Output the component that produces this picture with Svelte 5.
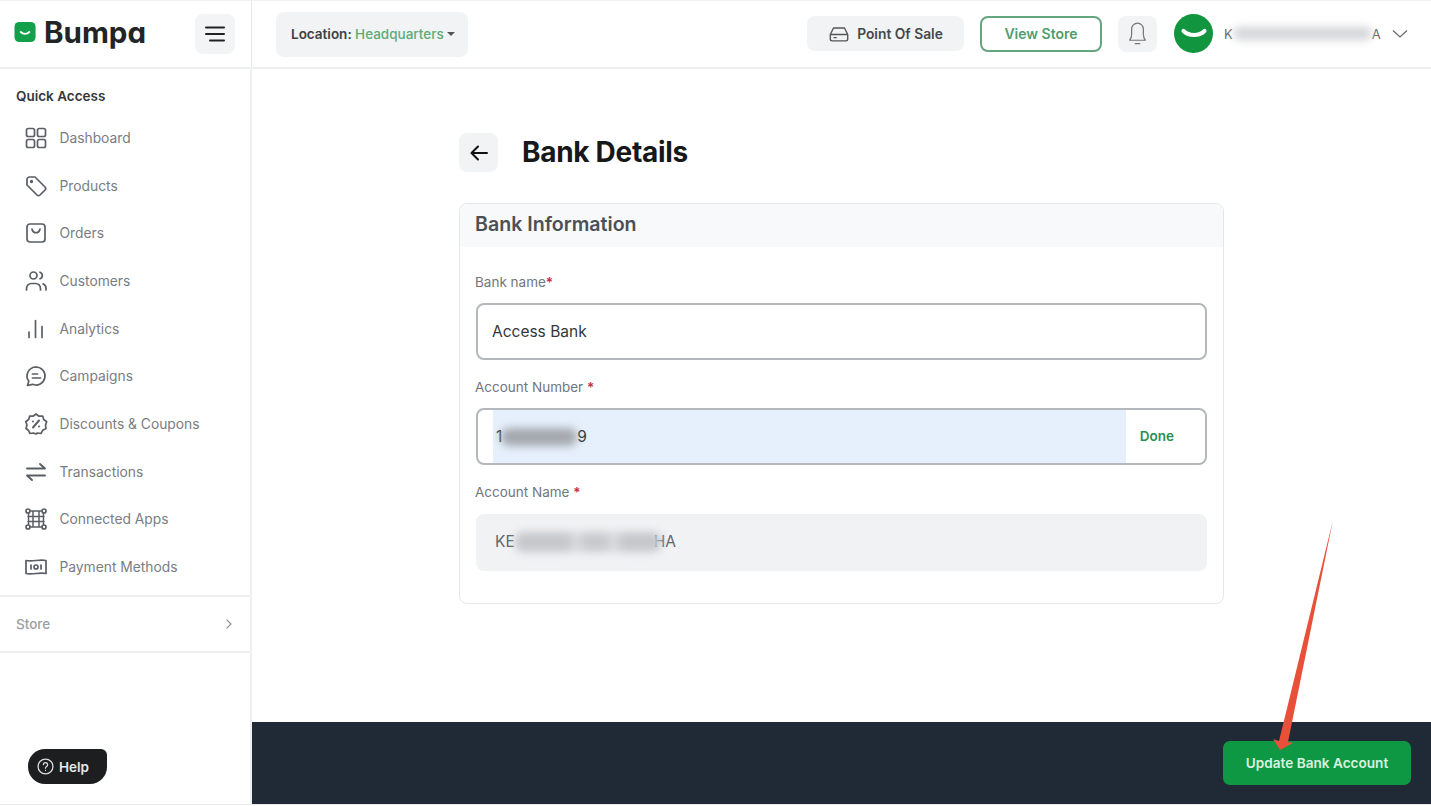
<script>
  const menu = [
    { label: "Dashboard", icon: "grid" },
    { label: "Products", icon: "tag" },
    { label: "Orders", icon: "bag" },
    { label: "Customers", icon: "users" },
    { label: "Analytics", icon: "bars" },
    { label: "Campaigns", icon: "chat" },
    { label: "Discounts & Coupons", icon: "percent" },
    { label: "Transactions", icon: "swap" },
    { label: "Connected Apps", icon: "apps" },
    { label: "Payment Methods", icon: "cash" }
  ];
</script>

<div class="page">
  <header class="top">
    <div class="brand">
      <svg class="logo" viewBox="0 0 24 24" width="23" height="23">
        <rect x="0.5" y="1" width="22" height="21" rx="5" fill="#12a04a" />
        <path d="M7 11.5c2.5 2.6 6.5 2.6 9 0" fill="none" stroke="#fff" stroke-width="2" stroke-linecap="round" />
      </svg>
      <span class="wordmark">Bumpa</span>
      <button class="burger" aria-label="Menu">
        <svg viewBox="0 0 24 24" width="24" height="24" fill="none" stroke="#222" stroke-width="2" stroke-linecap="round">
          <path d="M3 5.5h18M3 12h18M7 18.5h14" />
        </svg>
      </button>
    </div>
    <div class="topbar">
      <button class="location">Location:&nbsp;<span>Headquarters</span><i></i></button>
      <div class="spacer"></div>
      <button class="pos">
        <svg viewBox="0 0 24 24" width="22" height="22" fill="none" stroke="#555" stroke-width="1.5" stroke-linejoin="round">
          <path d="M6 5.500h12l3.500 7v5a2 2 0 0 1-2 2h-15a2 2 0 0 1-2-2v-5z" />
          <path d="M2.500 12.500h19M6 16h3.500" />
        </svg>
        Point Of Sale
      </button>
      <button class="view">View Store</button>
      <button class="bell" aria-label="Notifications">
        <svg viewBox="0 0 24 24" width="27" height="27" fill="none" stroke="#777" stroke-width="1.1" stroke-linejoin="round">
          <path d="M5 18c1.400-1.400 1.800-3 1.800-5.500V8a5.200 5.200 0 0 1 10.400 0v4.500c0 2.500.4 4.100 1.800 5.500z" />
          <path d="M10 21h4" stroke-linecap="round" />
        </svg>
      </button>
      <div class="avatar">
        <svg viewBox="0 0 40 40" width="30" height="30">
          <path d="M6 16c7 7 21 7 28 0" fill="none" stroke="#fff" stroke-width="5.500" stroke-linecap="round" />
        </svg>
      </div>
      <div class="user">K<span class="smudge user-smudge"></span>A</div>
      <svg class="caret" viewBox="0 0 16 10" width="16" height="10" fill="none" stroke="#666" stroke-width="1.2">
        <path d="M1 1.5l7 6.5 7-6.5" />
      </svg>
    </div>
  </header>

  <div class="body">
    <aside class="side">
      <h4>Quick Access</h4>
      <nav>
        {#each menu as item}
          <div class="item">
            <svg viewBox="0 0 24 24" width="24" height="24" fill="none" stroke="#5a5f66" stroke-width="1.7" stroke-linecap="round" stroke-linejoin="round">
              {#if item.icon == "grid"}
                <rect x="2.5" y="2.5" width="8" height="8" rx="1.8" />
                <rect x="13.5" y="2.5" width="8" height="8" rx="1.8" />
                <rect x="2.5" y="13.5" width="8" height="8" rx="1.8" />
                <rect x="13.5" y="13.5" width="8" height="8" rx="1.8" />
              {:else if item.icon == "tag"}
                <path d="M3 5.5A2.5 2.5 0 0 1 5.500 3h5.500l10 10a2.200 2.200 0 0 1 0 3l-5 5a2.200 2.200 0 0 1-3 0L3 11z" />
                <circle cx="7.500" cy="7.500" r="0.800" />
              {:else if item.icon == "bag"}
                <rect x="3" y="3" width="18" height="18" rx="3" />
                <path d="M8 8c1 5 7 5 8 0" />
              {:else if item.icon == "users"}
                <circle cx="9.500" cy="6.500" r="3.500" />
                <path d="M2.500 21v-1.500a5 5 0 0 1 5-5h4a5 5 0 0 1 5 5V21" />
                <path d="M16 3.200a3.500 3.500 0 0 1 0 6.600M19 14.800a5 5 0 0 1 3 4.500V21" />
              {:else if item.icon == "bars"}
                <path d="M5 15v5.500M11.500 3.500v17M18 9.500v11" />
              {:else if item.icon == "chat"}
                <path d="M12 3a9 9 0 1 1-3.500 17.300L3.500 21.500l1.300-4.200A9 9 0 0 1 12 3z" />
                <path d="M8.500 10h5M8.500 14h8" />
              {:else if item.icon == "percent"}
                <path d="M12 2l3 2.200 3.700-.2 1 3.500 3 2.200L21.500 13l.5 3.500-3.200 1.700L17 21.500l-3.600-.5L12 22l-2.500-1-3.500.5-1.700-3.300L2 16.500 3 13 1.700 9.700l3-2.200 1-3.500 3.300.2z" />
                <path d="M9 15.500l6-7M9 9.500v.01M15 14.500v.01" stroke-width="2" />
              {:else if item.icon == "swap"}
                <path d="M3 8.500h18L16 4M21 15.500H3L8 20" stroke-width="1.900" />
              {:else if item.icon == "apps"}
                <circle cx="4" cy="4" r="2" />
                <circle cx="20" cy="4" r="2" />
                <circle cx="4" cy="20" r="2" />
                <circle cx="20" cy="20" r="2" />
                <path d="M6 4h12M6 20h12M4.500 6v12M19.500 6v12M9 4v16M15 4v16M4 9.500h16M4 14.500h16" stroke-width="1.500" />
              {:else}
                <path d="M2 5.500c6 1.500 14-1.500 20 0v13c-6-1.500-14 1.500-20 0z" />
                <circle cx="12" cy="12" r="2" />
                <path d="M7 10v4M17 10v4" />
              {/if}
            </svg>
            <span>{item.label}</span>
          </div>
        {/each}
      </nav>
      <div class="store">
        <span>Store</span>
        <svg viewBox="0 0 10 14" width="8" height="12" fill="none" stroke="#8a8f96" stroke-width="1.500">
          <path d="M2 1.500l5.500 5.500L2 12.500" />
        </svg>
      </div>
      <button class="help">
        <svg viewBox="0 0 24 24" width="17" height="17" fill="none" stroke="#ddd" stroke-width="1.800" stroke-linecap="round">
          <circle cx="12" cy="12" r="10.500" />
          <path d="M9 9.500a3 3 0 1 1 4.500 2.600c-1 .6-1.500 1.200-1.500 2.200M12 17.500v.01" />
        </svg>
        Help
      </button>
    </aside>

    <main class="main">
      <div class="content">
        <div class="title">
          <button class="back" aria-label="Back">
            <svg viewBox="0 0 24 24" width="24" height="24" fill="none" stroke="#111" stroke-width="2" stroke-linecap="round" stroke-linejoin="round">
              <path d="M20 12H4.500M11 5.500L4.500 12l6.500 6.500" />
            </svg>
          </button>
          <h1>Bank Details</h1>
        </div>
        <section class="card">
          <h2>Bank Information</h2>
          <div class="fields">
            <div class="label first">Bank name<b>*</b></div>
            <div class="input">Access Bank</div>
            <div class="label">Account Number <b>*</b></div>
            <div class="input number">
              <div class="filled">1<span class="smudge num-smudge"></span>9</div>
              <span class="done">Done</span>
            </div>
            <div class="label last">Account Name <b>*</b></div>
            <div class="input readonly">KE<span class="smudge name-smudge"></span>HA</div>
          </div>
        </section>
      </div>
      <footer class="bar">
        <button class="update">Update Bank Account</button>
      </footer>
    </main>
  </div>

  <svg class="arrow" viewBox="0 0 1431 806" width="1431" height="806">
    <path d="M1333 520L1288 742L1293 743L1280 750L1273 739L1279 741z" fill="#e8503a" />
  </svg>
</div>

<style>
  :global(body) {
    margin: 0;
    background: #fff;
  }
  .page {
    position: relative;
    width: 1431px;
    height: 806px;
    overflow: hidden;
    box-sizing: border-box;
    display: flex;
    flex-direction: column;
    padding-bottom: 1px;
    border-top: 1px solid #f0f1f2;
    font-family: Inter, "Liberation Sans", sans-serif;
    color: #555b63;
  }
  button {
    font-family: inherit;
    border: none;
    cursor: pointer;
  }
  .top {
    display: flex;
    height: 68px;
    flex: none;
    box-sizing: border-box;
    border-bottom: 2px solid #eeeff0;
  }
  .brand {
    width: 252px;
    box-sizing: border-box;
    border-right: 1px solid #e6e7e9;
    display: flex;
    align-items: center;
    padding: 0 16px 0 14px;
  }
  .logo {
    margin-bottom: 4px;
  }
  .wordmark {
    margin-left: 7px;
    font-size: 29.500px;
    font-weight: 700;
    color: #222426;
    font-feature-settings: "cv11";
    margin-bottom: 4px;
  }
  .burger {
    margin-left: auto;
    width: 40px;
    height: 40px;
    border-radius: 8px;
    background: #f3f4f5;
    display: flex;
    align-items: center;
    justify-content: center;
    padding: 0;
  }
  .topbar {
    flex: 1;
    display: flex;
    align-items: center;
    padding: 0 23px 1px 24px;
  }
  .location {
    height: 45px;
    width: 192px;
    border-radius: 8px;
    background: #f2f3f4;
    font-size: 13.500px;
    font-weight: 600;
    color: #3c4045;
    display: flex;
    align-items: center;
    padding: 0 0 0 15px;
    white-space: nowrap;
    margin-top: 1px;
  }
  .location span {
    color: #5bab78;
    font-weight: 500;
  }
  .location i {
    margin-left: 3px;
    border: 4px solid transparent;
    border-top: 4px solid #555;
    border-bottom: none;
  }
  .spacer {
    flex: 1;
  }
  .pos {
    height: 35px;
    width: 157px;
    border-radius: 8px;
    background: #f2f3f4;
    font-size: 13.800px;
    font-weight: 600;
    color: #45494e;
    display: flex;
    align-items: center;
    justify-content: center;
    gap: 7px;
    padding: 0;
  }
  .view {
    margin-left: 16px;
    width: 122px;
    height: 36px;
    border-radius: 8px;
    background: #fff;
    border: 2px solid #64a67f;
    color: #4f9d6e;
    font-size: 14px;
    font-weight: 600;
    padding: 0;
  }
  .bell {
    margin-left: 16px;
    width: 39px;
    height: 36px;
    border-radius: 8px;
    background: #f2f3f4;
    display: flex;
    align-items: center;
    justify-content: center;
    padding: 0;
  }
  .avatar {
    margin-left: 17px;
    width: 39px;
    height: 39px;
    border-radius: 50%;
    background: #12953f;
    display: flex;
    align-items: center;
    justify-content: center;
  }
  .user {
    margin-left: 11px;
    font-size: 13px;
    color: #666;
    display: flex;
    align-items: center;
    width: 162px;
  }
  .caret {
    margin-left: 6px;
  }
  .smudge {
    display: block;
    background: #b9bcc0;
    filter: blur(4px);
    border-radius: 8px;
    flex: none;
  }
  .user-smudge {
    width: 139px;
    height: 13px;
    background: #d3d5d8;
  }
  .body {
    flex: 1;
    display: flex;
    min-height: 0;
    border-bottom: 1px solid #e9eaec;
  }
  .side {
    width: 252px;
    flex: none;
    box-sizing: border-box;
    border-right: 2px solid #eeeff0;
    display: flex;
    flex-direction: column;
  }
  h4 {
    margin: 19px 0 0 16px;
    font-size: 13.500px;
    line-height: 17px;
    font-weight: 600;
    color: #33373b;
  }
  nav {
    margin-top: 9px;
    padding-left: 24px;
  }
  .item {
    height: 47.700px;
    display: flex;
    align-items: center;
    gap: 11.500px;
    font-size: 13.800px;
    color: #787d84;
  }
  .store {
    margin-top: 4px;
    height: 58px;
    box-sizing: border-box;
    border-top: 2px solid #eeeff0;
    border-bottom: 2px solid #eeeff0;
    display: flex;
    align-items: center;
    justify-content: space-between;
    padding: 0 17px 0 16px;
    font-size: 13.500px;
    font-weight: 500;
    color: #9a9ea4;
  }
  .help {
    margin: auto 0 20px 28px;
    width: 79px;
    height: 35px;
    border-radius: 17px 6px 17px 17px;
    background: #1d1e20;
    color: #e8e8e8;
    font-size: 13.500px;
    font-weight: 600;
    display: flex;
    align-items: center;
    gap: 5px;
    padding: 0 0 0 9px;
  }
  .main {
    flex: 1;
    display: flex;
    flex-direction: column;
    min-width: 0;
  }
  .content {
    flex: 1;
    padding: 64px 207px 0 207px;
  }
  .title {
    display: flex;
    align-items: center;
    gap: 24px;
  }
  .back {
    width: 39px;
    height: 39px;
    border-radius: 8px;
    background: #f2f3f4;
    display: flex;
    align-items: center;
    justify-content: center;
    padding: 0;
  }
  h1 {
    margin: 0 0 2px;
    font-size: 28px;
    font-weight: 700;
    letter-spacing: -0.300px;
    color: #16181a;
  }
  .card {
    margin-top: 31px;
    height: 401px;
    box-sizing: border-box;
    border: 1px solid #e6e7e9;
    border-radius: 8px;
    overflow: hidden;
  }
  h2 {
    margin: 0;
    height: 43px;
    padding-left: 15px;
    background: #f8f9fa;
    font-size: 19.600px;
    line-height: 41px;
    font-weight: 600;
    color: #4b5057;
  }
  .fields {
    padding: 0 16px;
  }
  .label {
    font-size: 13.500px;
    line-height: 17px;
    color: #71767c;
    margin: 19px 0 12px -1px;
  }
  .label.first {
    margin-top: 27px;
  }
  .label.last {
    margin-bottom: 13px;
  }
  .label b {
    color: #c8283f;
    font-weight: 600;
  }
  .input {
    height: 57px;
    box-sizing: border-box;
    border: 2px solid #b4b7bb;
    border-radius: 8px;
    display: flex;
    align-items: center;
    padding: 0 0 1px 14px;
    font-size: 15.500px;
    color: #33373b;
  }
  .number {
    overflow: hidden;
    justify-content: space-between;
    padding: 0 0 0 15px;
  }
  .filled {
    align-self: stretch;
    width: 630px;
    background: #e6f0fc;
    display: flex;
    align-items: center;
    padding-left: 3px;
  }
  .num-smudge {
    width: 76px;
    height: 18px;
    margin: 0 0 0 -1px;
    background: #a4a8ae;
  }
  .done {
    font-size: 13.500px;
    font-weight: 600;
    color: #2a8f52;
    margin: 0 31px 2px 0;
  }
  .readonly {
    border: none;
    background: #f1f2f4;
    padding: 0 0 2px 19px;
    color: #60656b;
  }
  .name-smudge {
    width: 146px;
    height: 20px;
    margin-right: -7px;
    background: linear-gradient(90deg, #c5c7cb 0 36%, #dcdee1 42%, #c8cacd 48% 62%, #dcdee1 68%, #c5c7cb 74%);
    position: relative;
  }
  .bar {
    height: 82px;
    flex: none;
    background: #1f2a36;
    display: flex;
    align-items: center;
    justify-content: flex-end;
    padding: 0 20px 0 0;
  }
  .update {
    width: 188px;
    height: 44px;
    border-radius: 7px;
    background: #0f9843;
    color: #d9f2e0;
    font-size: 13.600px;
    font-weight: 600;
    padding: 0;
  }
  .arrow {
    position: absolute;
    left: 0;
    top: -1px;
    pointer-events: none;
  }
</style>
